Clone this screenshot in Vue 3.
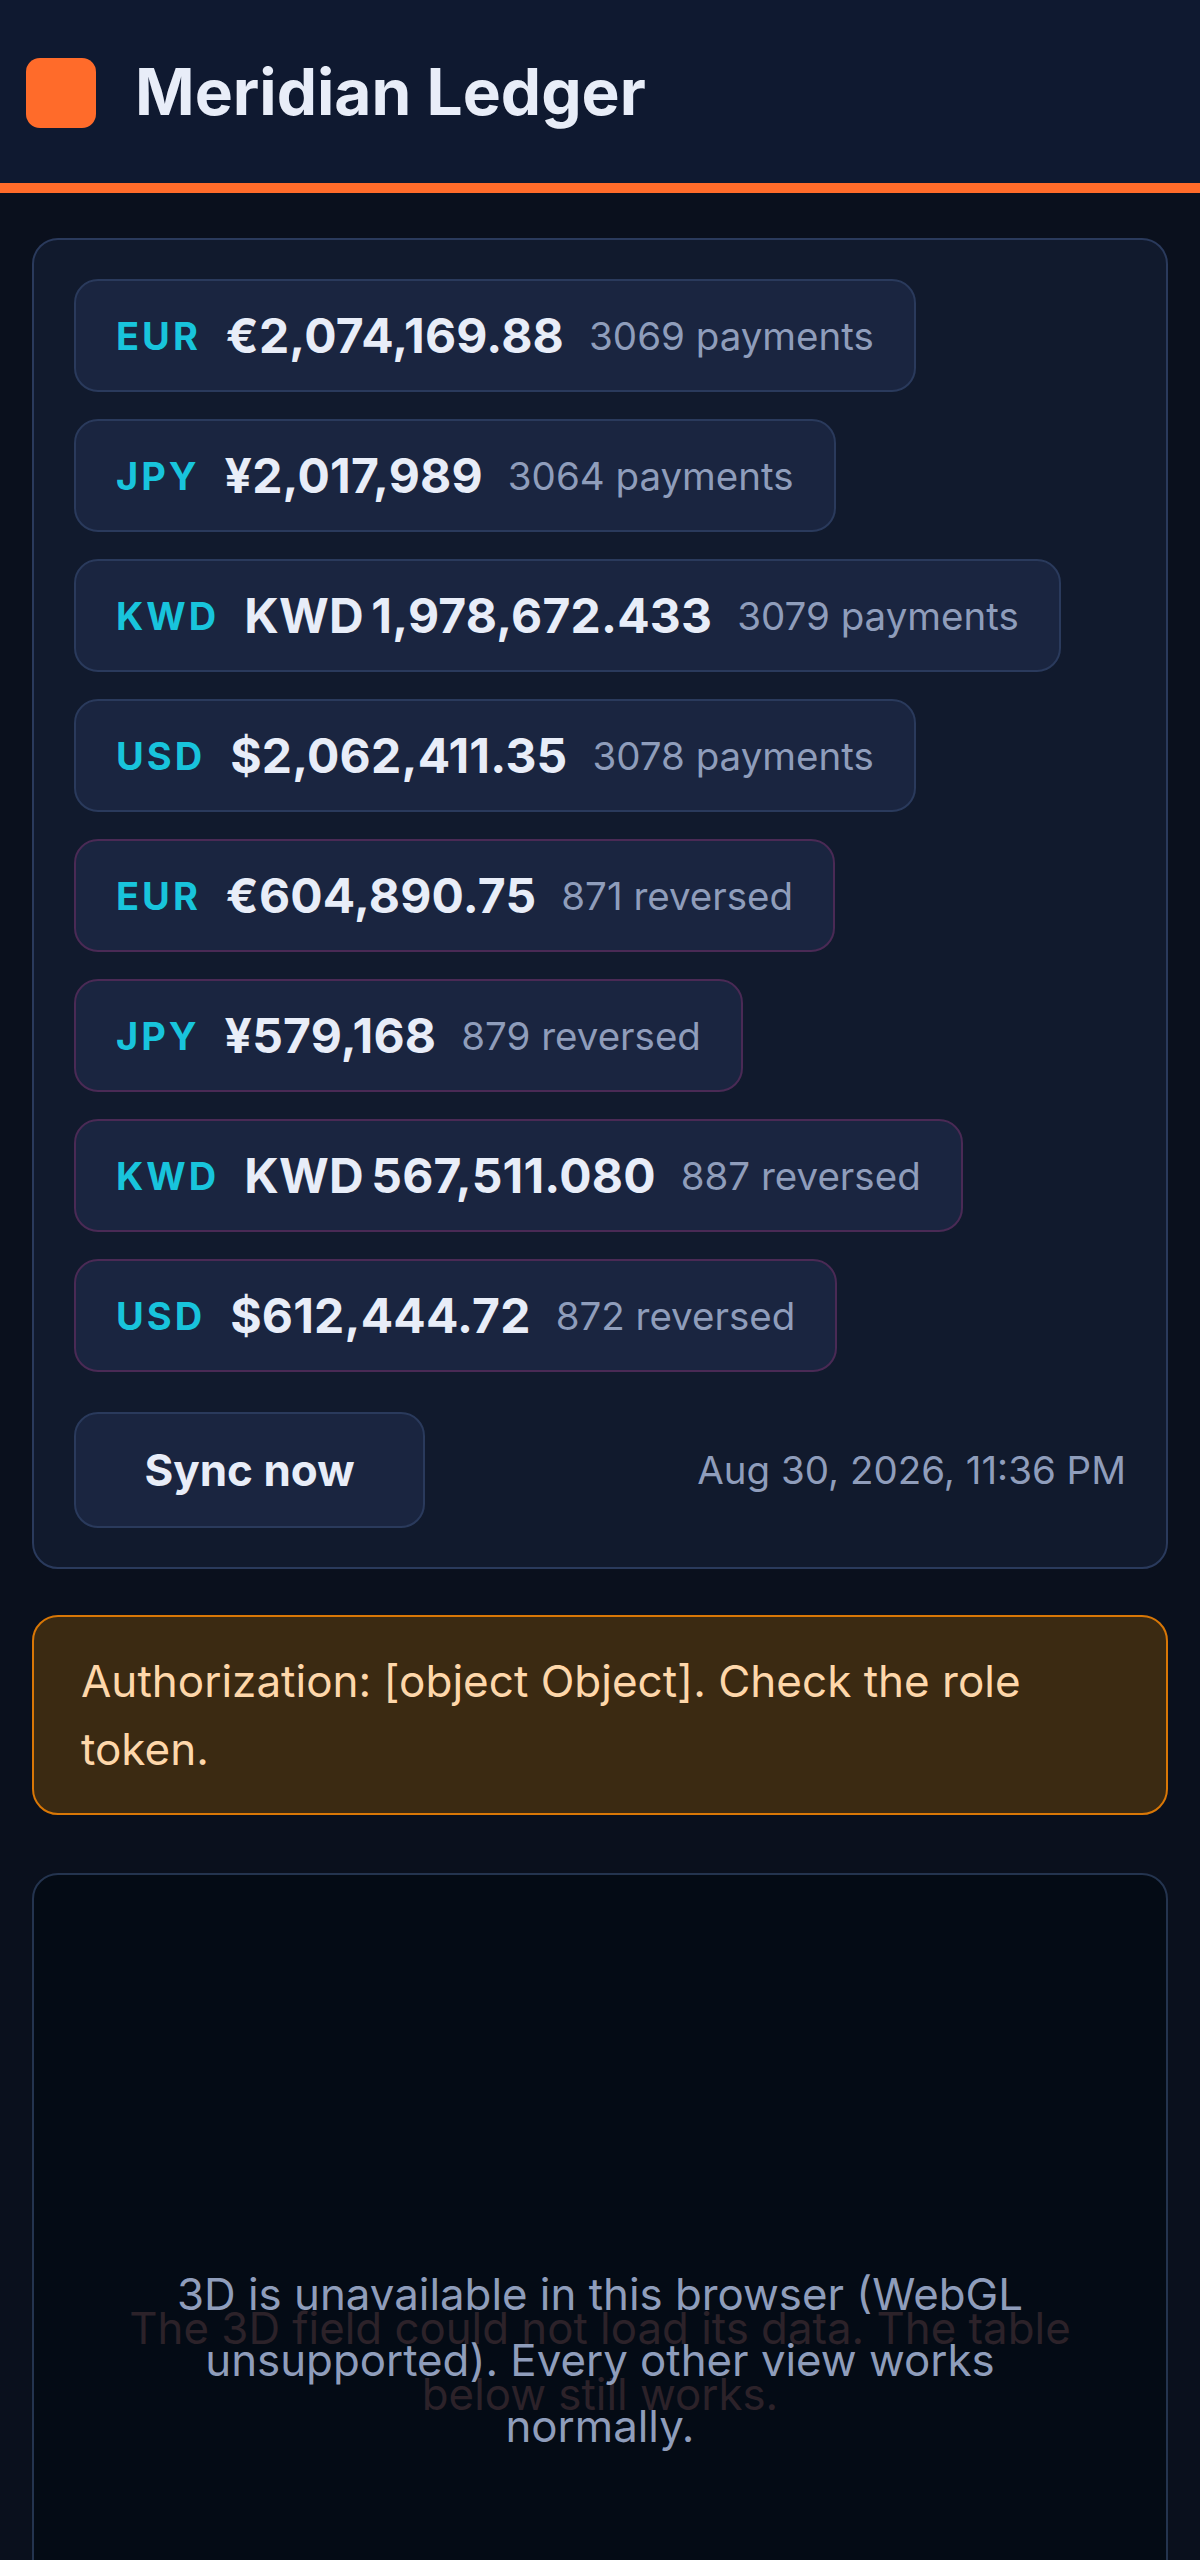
<script setup>
const totals = [
  { code: 'EUR', amount: '€2,074,169.88', note: '3069 payments' },
  { code: 'JPY', amount: '¥2,017,989', note: '3064 payments' },
  { code: 'KWD', amount: 'KWD 1,978,672.433', note: '3079 payments' },
  { code: 'USD', amount: '$2,062,411.35', note: '3078 payments' },
  { code: 'EUR', amount: '€604,890.75', note: '871 reversed', reversed: true },
  { code: 'JPY', amount: '¥579,168', note: '879 reversed', reversed: true },
  { code: 'KWD', amount: 'KWD 567,511.080', note: '887 reversed', reversed: true },
  { code: 'USD', amount: '$612,444.72', note: '872 reversed', reversed: true }
]
</script>

<template>
  <div class="page">
    <header class="topbar">
      <span class="logo"></span>
      <h1>Meridian Ledger</h1>
    </header>

    <main class="content">
      <section class="card">
        <div
          v-for="(item, i) in totals"
          :key="i"
          class="pill"
          :class="{ reversed: item.reversed }"
        >
          <span class="code">{{ item.code }}</span>
          <span class="amount">{{ item.amount }}</span>
          <span class="note">{{ item.note }}</span>
        </div>
        <div class="sync-row">
          <button class="sync">Sync now</button>
          <span class="stamp">Aug 30, 2026, 11:36 PM</span>
        </div>
      </section>

      <div class="alert">Authorization: [object Object]. Check the role token.</div>

      <section class="field">
        <p class="ghost">The 3D field could not load its data. The table below still works.</p>
        <p class="fallback">3D is unavailable in this browser (WebGL unsupported). Every other view works normally.</p>
      </section>
    </main>
  </div>
</template>

<style>
html, body {
  background: #0a101d;
}
</style>

<style scoped>
.page {
  height: 2560px;
  overflow: hidden;
  background: #0a101d;
  font-family: Inter, "Liberation Sans", sans-serif;
  color: #e8edf8;
}

.topbar {
  height: 180px;
  display: flex;
  align-items: center;
  gap: 39px;
  padding: 3px 0 0 26px;
  background: #0f1930;
  border-bottom: 10px solid #ff6b2a;
}

.logo {
  width: 70px;
  height: 70px;
  border-radius: 14px;
  background: #ff6b2a;
}

h1 {
  margin: 0 0 3px;
  font-size: 64px;
  font-weight: 700;
  color: #e8edf8;
}

.content {
  display: flex;
  flex-direction: column;
  gap: 46px;
  padding: 45px 32px 0;
}

.card {
  display: flex;
  flex-direction: column;
  align-items: flex-start;
  gap: 27px;
  padding: 39px 40px;
  background: #111a2d;
  border: 2px solid #2a3a5c;
  border-radius: 26px;
}

.pill {
  display: flex;
  align-items: center;
  gap: 25px;
  height: 113px;
  box-sizing: border-box;
  padding: 0 40px;
  background: #1a2540;
  border: 2px solid #2a3a5c;
  border-radius: 24px;
}

.pill.reversed {
  border-color: #4a2a55;
}

.code {
  font-size: 38px;
  font-weight: 700;
  letter-spacing: 3px;
  color: #18c4dc;
}

.amount {
  font-size: 48px;
  font-weight: 700;
  letter-spacing: 0.2px;
  word-spacing: -4px;
  color: #e8edf8;
}

.note {
  font-size: 38.5px;
  color: #8f9dbb;
}

.sync-row {
  align-self: stretch;
  display: flex;
  align-items: center;
  justify-content: space-between;
  margin-top: 13px;
}

.sync {
  width: 351px;
  height: 116px;
  background: #1a2540;
  border: 2px solid #2a3a5c;
  border-radius: 24px;
  font-family: inherit;
  font-size: 44px;
  font-weight: 700;
  color: #e8edf8;
}

.stamp {
  font-size: 38.5px;
  color: #8f9dbb;
}

.alert {
  padding: 30px 47px;
  background: #3b2a12;
  border: 2px solid #d97706;
  border-radius: 26px;
  font-size: 44px;
  line-height: 68px;
  color: #fed7aa;
}

.field {
  position: relative;
  margin-top: 12px;
  height: 980px;
  background: #040b15;
  border: 2px solid #24344f;
  border-radius: 26px;
}

.ghost,
.fallback {
  position: absolute;
  left: 0;
  right: 0;
  margin: 0;
  text-align: center;
  font-size: 43.8px;
  line-height: 66px;
}

.ghost {
  top: 421px;
  padding: 0 90px;
  color: #2c2229;
}

.fallback {
  top: 387px;
  padding: 0 130px;
  color: #8f9dbb;
}
</style>
